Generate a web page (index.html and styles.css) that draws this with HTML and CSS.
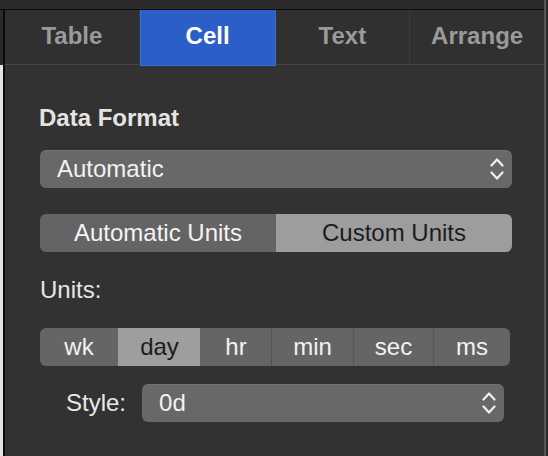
FILE: index.html
```html
<!DOCTYPE html>
<html>
<head>
<meta charset="utf-8">
<link rel="stylesheet" href="styles.css">
</head>
<body>
<div class="window">
  <div class="main">
    <div class="topstrip"></div>
    <div class="frame">
      <div class="gutter"></div>
      <div class="edge"></div>
      <div class="inspector">
        <nav class="tabs">
          <div class="tab">Table</div>
          <div class="tab active">Cell</div>
          <div class="tab">Text</div>
          <div class="tab">Arrange</div>
        </nav>
        <div class="content">
          <div class="section-title">Data Format</div>
          <div class="popup">
            <span class="popup-text">Automatic</span>
            <svg class="chev" width="14" height="22" viewBox="0 0 14 22"><polyline points="1.5,7.5 7,1.5 12.5,7.5"/><polyline points="1.5,14.5 7,20.5 12.5,14.5"/></svg>
          </div>
          <div class="seg2">
            <div class="seg2-item">Automatic Units</div>
            <div class="seg2-item on">Custom Units</div>
          </div>
          <div class="label">Units:</div>
          <div class="units">
            <div class="unit">wk</div>
            <div class="unit on">day</div>
            <div class="unit">hr</div>
            <div class="unit">min</div>
            <div class="unit">sec</div>
            <div class="unit">ms</div>
          </div>
          <div class="style-row">
            <span class="style-label">Style:</span>
            <div class="popup popup-style">
              <span class="popup-text">0d</span>
              <svg class="chev" width="14" height="22" viewBox="0 0 14 22"><polyline points="1.5,7.5 7,1.5 12.5,7.5"/><polyline points="1.5,14.5 7,20.5 12.5,14.5"/></svg>
            </div>
          </div>
        </div>
      </div>
    </div>
  </div>
  <div class="rborder"></div>
  <div class="rpad"></div>
</div>
</body>
</html>
```
FILE: styles.css
```css
html, body {
  margin: 0;
  padding: 0;
}
body {
  background: #2b2b2b;
  font-family: "Liberation Sans", Arial, sans-serif;
  font-size: 24px;
  width: 548px;
  height: 456px;
  overflow: hidden;
}
.window {
  display: flex;
  height: 456px;
}
.main {
  width: 544px;
  display: flex;
  flex-direction: column;
}
.topstrip {
  height: 9px;
  background: #2b2b2b;
  border-bottom: 1px solid #0c0c0c;
}
.frame {
  flex: 1;
  display: flex;
}
.gutter {
  width: 3px;
  background: linear-gradient(#2b2b2b 55px, #e4e4e4 55px);
}
.edge {
  width: 2px;
  background: #0b0b0b;
}
.inspector {
  flex: 1;
  background: #323232;
  display: flex;
  flex-direction: column;
}
.rborder {
  width: 2px;
  background: #565656;
}
.rpad {
  width: 2px;
  background: #2b2b2b;
}
.tabs {
  display: flex;
  height: 55px;
  background: #303030;
}
.tab {
  flex: 1;
  text-align: center;
  font-weight: bold;
  color: #9a9a9a;
  line-height: 52px;
  padding-bottom: 2px;
  border-bottom: 1px solid #464646;
  border-right: 1px solid #3c3c3c;
}
.tab:last-child {
  border-right: none;
}
.tab.active {
  background: #2b5ec7;
  color: #ffffff;
  border: 1px solid #3a6dd3;
  border-top: none;
  margin-bottom: -1px;
  line-height: 52px;
  padding-bottom: 3px;
}
.content {
  padding: 0 32px 0 35px;
  display: flex;
  flex-direction: column;
}
.section-title {
  margin-top: 39px;
  line-height: 28px;
  font-weight: bold;
  color: #e4e4e4;
  margin-left: -1px;
}
.popup {
  margin-top: 18px;
  height: 38px;
  border-radius: 6px;
  background: #686868;
  box-shadow: inset 0 1px 0 rgba(255, 255, 255, 0.07);
  display: flex;
  align-items: center;
  padding: 0 8px 0 17px;
  color: #f2f2f2;
}
.popup-text {
  flex: 1;
  line-height: 28px;
}
.chev {
  display: block;
}
.chev polyline {
  fill: none;
  stroke: #f0f0f0;
  stroke-width: 2.2;
  stroke-linecap: round;
  stroke-linejoin: round;
}
.seg2 {
  margin-top: 26px;
  height: 38px;
  border-radius: 6px;
  overflow: hidden;
  display: grid;
  grid-template-columns: 1fr 1fr;
}
.seg2-item {
  display: flex;
  align-items: center;
  justify-content: center;
  background: #646464;
  color: #f4f4f4;
}
.seg2-item.on {
  background: #9d9d9d;
  color: #1c1c1c;
}
.label {
  margin-top: 24px;
  line-height: 28px;
  color: #e6e6e6;
}
.units {
  margin-top: 24px;
  margin-right: 2px;
  height: 38px;
  border-radius: 6px;
  overflow: hidden;
  background: #656565;
  display: grid;
  grid-template-columns: 78fr 82fr 71fr 82fr 80fr 77fr;
}
.unit {
  display: flex;
  align-items: center;
  justify-content: center;
  color: #f2f2f2;
  padding-bottom: 1px;
}
.unit + .unit {
  border-left: 1px solid #555555;
}
.unit.on,
.unit.on + .unit {
  border-left-color: transparent;
}
.unit.on {
  background: #9e9e9e;
  color: #1c1c1c;
}
.style-row {
  margin-top: 18px;
  margin-right: 8px;
  padding-left: 26px;
  display: flex;
  align-items: center;
}
.style-label {
  color: #e8e8e8;
  margin-right: 16px;
  line-height: 28px;
}
.popup-style {
  flex: 1;
  margin-top: 0;
}
```
